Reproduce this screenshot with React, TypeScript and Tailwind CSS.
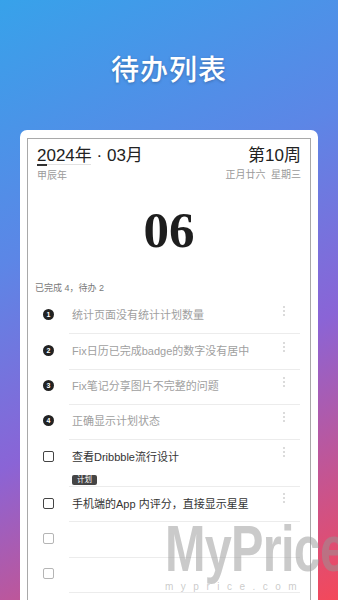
import React from 'react'

const sans = { fontFamily: '"Liberation Sans", "Noto Sans CJK SC", sans-serif' }

type Todo = { text: string; done: boolean; num?: number; tag?: string; menu: boolean; h: string; pt: string; dotPt: string }

const todos: Todo[] = [
    { text: '统计页面没有统计计划数量', done: true, num: 1, menu: true, h: 'h-[36px]', pt: 'pt-[10px]', dotPt: 'pt-[8px]' },
    { text: 'Fix日历已完成badge的数字没有居中', done: true, num: 2, menu: true, h: 'h-[36px]', pt: 'pt-[10px]', dotPt: 'pt-[8px]' },
    { text: 'Fix笔记分享图片不完整的问题', done: true, num: 3, menu: true, h: 'h-[35px]', pt: 'pt-[9px]', dotPt: 'pt-[7px]' },
    { text: '正确显示计划状态', done: true, num: 4, menu: true, h: 'h-[35px]', pt: 'pt-[9px]', dotPt: 'pt-[7px]' },
    { text: '查看Dribbble流行设计', done: false, tag: '计划', menu: true, h: 'h-[47px]', pt: 'pt-[10px]', dotPt: 'pt-[7px]' },
    { text: '手机端的App 内评分，直接显示星星', done: false, menu: true, h: 'h-[35px]', pt: 'pt-[10px]', dotPt: 'pt-[6px]' },
    { text: '', done: false, menu: false, h: 'h-[36px]', pt: 'pt-[10px]', dotPt: '' },
    { text: '', done: false, menu: false, h: 'h-[35px]', pt: 'pt-[9px]', dotPt: '' },
]

const Dots = () => (
    <div className='flex flex-col gap-[2px] items-center w-[4px]'>
        <span className='w-[2px] h-[2px] rounded-full bg-[#cfcfcf]' />
        <span className='w-[2px] h-[2px] rounded-full bg-[#cfcfcf]' />
        <span className='w-[2px] h-[2px] rounded-full bg-[#cfcfcf]' />
    </div>
)

const Row = ({ t }: { t: Todo }) => {
    const empty = t.text === ''
    return (
        <div className={`flex ${t.h}`}>
            <div className={`w-[41px] flex justify-center ${t.pt}`}>
                <div className='h-[14px] flex items-center'>
                    {t.num ? (
                        <span className='w-[11px] h-[11px] rounded-full bg-[#222] text-white text-[7px] leading-[11px] text-center font-bold'>{t.num}</span>
                    ) : (
                        <span className={`w-[11px] h-[11px] rounded-[2px] border-[1.5px] ${empty ? 'border-[#b5b5b5]' : 'border-[#444]'}`} />
                    )}
                </div>
            </div>
            <div className='flex-1 mr-[10px] border-b border-[#ececec] flex justify-between pl-[3px] pr-[14px]'>
                <div className={t.pt}>
                    <div className={`text-[11px] leading-[14px] ${t.done ? 'text-[#a0a0a0]' : 'text-[#333]'}`}>{t.text}</div>
                    {t.tag && (
                        <span className='inline-block mt-[11px] h-[10px] px-[5px] rounded-[2px] bg-[#454545] text-white text-[7.5px] leading-[10px]'>{t.tag}</span>
                    )}
                </div>
                {t.menu && <div className={t.dotPt}><Dots /></div>}
            </div>
        </div>
    )
}

export default function App() {
    return (
        <div style={sans} className='relative w-[338px] h-[600px] overflow-hidden bg-[linear-gradient(155deg,#37a2ea_0%,#5c86e6_35%,#8a64d6_62%,#f4485a_100%)]'>
            <div className='h-[130px] pt-[54px] text-center'>
                <h1 className='text-white text-[28px] leading-[34px] font-medium tracking-[1px] [text-shadow:0_1px_3px_rgba(0,0,0,0.25)]'>待办列表</h1>
            </div>

            <div className='mx-[20px] bg-white rounded-t-[7px] pt-[8px] px-[7px] h-[470px]'>
                <div className='border border-b-0 border-[#a9a9a9] h-full'>
                    <div className='flex justify-between px-[9px] pt-[7px]'>
                        <div>
                            <div className='text-[17px] leading-[20px] text-[#222]'>2024年 · 03月</div>
                            <div className='flex items-center -mt-[2px]'>
                                <span className='w-[10px] h-[1.5px] bg-[#333]' />
                                <span className='w-[44px] h-[1px] bg-[#e2e2e2]' />
                            </div>
                            <div className='mt-[4px] text-[10px] leading-[12px] text-[#9a9a9a]'>甲辰年</div>
                        </div>
                        <div className='text-right'>
                            <div className='text-[17px] leading-[20px] text-[#222]'>第10周</div>
                            <div className='mt-[3px] text-[10px] leading-[12px] text-[#9a9a9a]'>正月廿六&nbsp;&nbsp;星期三</div>
                        </div>
                    </div>

                    <div className='mt-[23px] text-center text-[51px] leading-[50px] font-bold text-[#1e1e1e]' style={{ fontFamily: '"Liberation Serif", "DejaVu Serif", serif' }}>06</div>

                    <div className='mt-[27px] px-[7px] text-[9px] leading-[12px] text-[#7a7a7a]'>已完成 4，待办 2</div>

                    <div className='mt-[4px]'>
                        {todos.map((t, i) => <Row key={i} t={t} />)}
                    </div>
                </div>
            </div>

            <div className='absolute left-[165px] top-[517px] pointer-events-none text-[rgba(150,150,150,0.5)]'>
                <div className='text-[64px] leading-[64px] font-bold tracking-[-1px] origin-left scale-x-[0.76] whitespace-nowrap'>MyPrice</div>
                <div className='mt-[0px] text-[10px] leading-[12px] tracking-[7.5px] font-light whitespace-nowrap'>myprice.com</div>
            </div>
        </div>
    )
}
